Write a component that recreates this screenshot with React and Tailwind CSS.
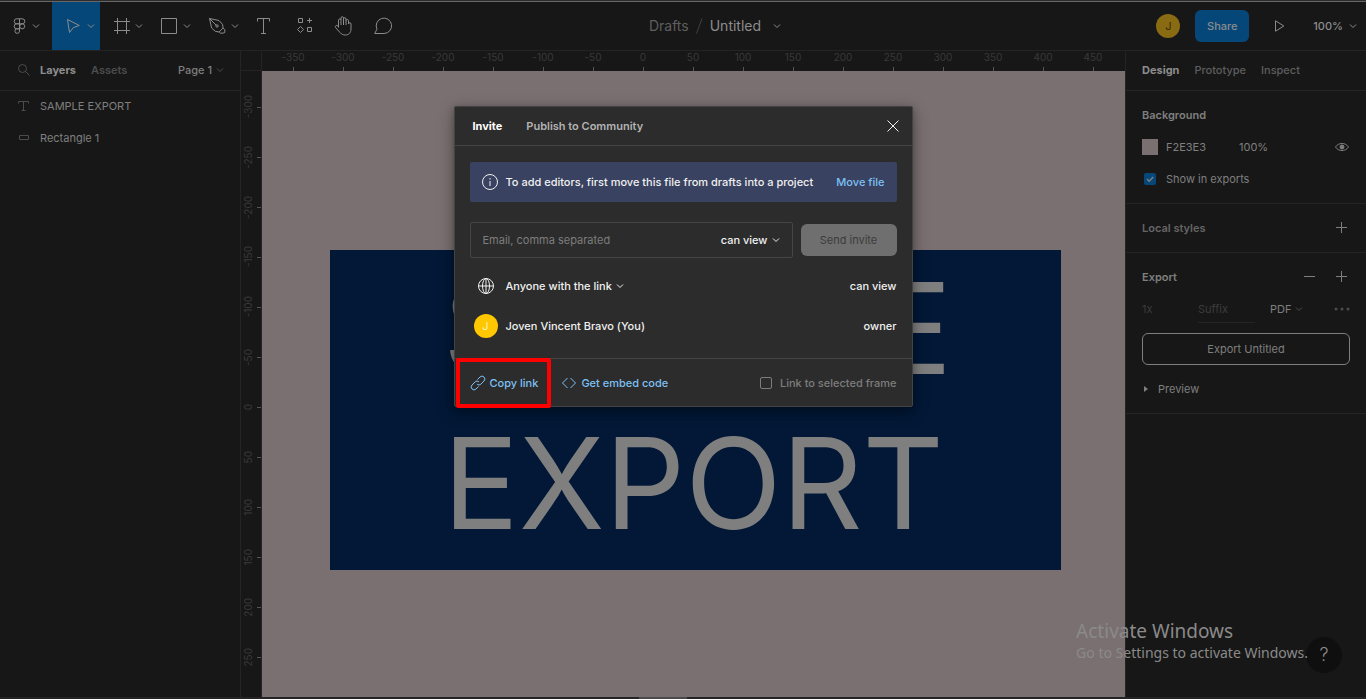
import { useState } from 'react'

const topMarks = [-350, -300, -250, -200, -150, -100, -50, 0, 50, 100, 150, 200, 250, 300, 350, 400, 450]
const sideMarks = [-300, -250, -200, -150, -100, -50, 0, 50, 100, 150, 200, 250]

function Icon({ size = 20, className = '', children }) {
  return (
    <svg width={size} height={size} viewBox={`0 0 ${size} ${size}`} fill="none" stroke="currentColor" className={`flex-shrink-0 ${className}`} aria-hidden="true">
      {children}
    </svg>
  )
}

function Chevron({ className = '' }) {
  return <Icon size={8} className={className}><path d="M1 2.5 4 5.5 7 2.5" /></Icon>
}

function Plus() {
  return <Icon size={12}><path d="M0 5.5h11M5.5 0v11" /></Icon>
}

function Tool({ label, menu, active, children }) {
  return (
    <button aria-label={label} className={`flex h-12 flex-shrink-0 items-center ${menu ? 'w-12 gap-[3px] pl-3' : 'w-10 justify-center'} ${active ? 'bg-[#06477a]' : ''}`}>
      {children}
      {menu && <Chevron />}
    </button>
  )
}

function Toolbar() {
  return (
    <header className="grid h-[49px] flex-shrink-0 grid-cols-[1fr_auto_1fr] items-start border-b border-[#242424] text-[#8c8c8c]">
      <div className="flex">
        <button aria-label="Main menu" className="flex h-12 w-[52px] flex-shrink-0 items-center gap-1 pl-3">
          <Icon size={16}>
            <path d="M7.5.8H4.7a2.5 2.5 0 0 0 0 5h2.8zM7.5.8h2.8a2.5 2.5 0 0 1 0 5H7.5zM7.5 5.8H4.7a2.5 2.5 0 0 0 0 5h2.8zM7.5 10.8H4.7a2.3 2.3 0 1 0 2.8 2.3z" />
            <circle cx="10.2" cy="8.3" r="2.5" />
          </Icon>
          <Chevron />
        </button>
        <Tool label="Move" menu active>
          <Icon><path d="M3.5 3.5 15.3 9.5l-6.1 2.2-3.7 4.8z" /></Icon>
        </Tool>
        <Tool label="Frame" menu>
          <Icon><path d="M5.5 2v16M14.5 2v16M2 5.5h16M2 14.5h16" /></Icon>
        </Tool>
        <Tool label="Rectangle" menu>
          <Icon><path d="M1.5 2.5h15v15h-15z" /></Icon>
        </Tool>
        <Tool label="Pen" menu>
          <Icon>
            <path d="M1.5 2.5 11 4.5l3.5 3.8.6 3.7-4 4-3.7-.6L3.6 12zM1.5 2.5l6.8 6.8M15.1 12l1.8 1.8-.1 2.7-1.8.6-2.4.1-1.5-1.2" />
            <circle cx="9" cy="10" r="1.2" />
          </Icon>
        </Tool>
        <Tool label="Text">
          <Icon><path d="M3.5 5.5v-3h12v3M9.5 2.5v15M7 17.5h5" /></Icon>
        </Tool>
        <Tool label="Resources">
          <Icon><path d="M4.5 2.5h4v4h-4zM13.5 11.5h4v4h-4zM15.5 2v5M13 4.5h5M6.5 10.5l3 3-3 3-3-3z" /></Icon>
        </Tool>
        <Tool label="Hand">
          <Icon>
            <path d="M4.5 11.5V4.2c0-1.8 2.5-1.8 2.5 0V9M7 4V2c0-1.8 2.5-1.8 2.5 0v7M9.500 3c0-1.800 2.500-1.800 2.500 0v6M12 4.700c0-1.700 2.500-1.700 2.500 0V8c0-1.700 2.500-1.700 2.500 0v5c0 3.500-2 6-5.500 6-2.500 0-4-.7-5.500-2.500l-4.500-5c-.8-1.500 1-2.800 2.300-1.600l.7.900" />
          </Icon>
        </Tool>
        <Tool label="Comment">
          <Icon><path d="M.7 17.5H10A7.7 7.7 0 1 0 3 13.2z" /></Icon>
        </Tool>
      </div>

      <div className="flex h-12 items-center pl-16 text-sm">
        <a href="#drafts" className="text-[#5e5e5e]">Drafts</a>
        <Icon className="text-[#404040]"><path d="M7.5 17.5 13 2.5" /></Icon>
        <button className="ml-px flex items-center gap-3">
          Untitled <Chevron />
        </button>
      </div>

      <div className="flex h-12 items-center justify-end pr-[9px]">
        <span className="flex size-6 items-center justify-center rounded-full bg-[#886b12] text-[#382c08]">J</span>
        <button className="ml-[15px] h-8 w-[54px] rounded-md bg-[#06477a] font-medium">Share</button>
        <button aria-label="Present" className="ml-6"><Icon size={12}><path d="M2.5.8v10.400L10.800 6z" /></Icon></button>
        <button className="ml-7 flex items-center gap-1.5 font-medium">
          100% <Chevron />
        </button>
      </div>
    </header>
  )
}

function LayersPanel() {
  return (
    <aside className="w-[241px] flex-shrink-0 border-r border-[#242424]">
      <div className="flex h-10 items-center border-b border-[#242424] pr-4 pb-0.5 pl-[18px]">
        <Icon size={12} className="text-[#4c4c4c]"><circle cx="4.5" cy="4.5" r="4" /><path d="m7.5 7.5 4 4" /></Icon>
        <button className="ml-2.5 font-bold text-[#8c8c8c]">Layers</button>
        <button className="ml-[15px] font-semibold text-[#4c4c4c]">Assets</button>
        <button className="ml-auto flex items-center gap-1 font-medium">
          Page 1 <Chevron className="text-[#4c4c4c]" />
        </button>
      </div>
      <ul>
        <li className="flex h-8 items-center gap-2.5 pb-0.5 pl-[18px]">
          <Icon size={12} className="text-[#4c4c4c]"><path d="M.5 3.5v-2h10v2M5.5 1.5v9M3.5 10.5h4" /></Icon>
          SAMPLE EXPORT
        </li>
        <li className="flex h-8 items-center gap-2.5 pb-0.5 pl-[18px]">
          <Icon size={12} className="text-[#4c4c4c]"><path d="M1.5 3.5h9v4h-9z" /></Icon>
          Rectangle 1
        </li>
      </ul>
    </aside>
  )
}

function Canvas() {
  return (
    <main className="flex min-w-0 flex-1 flex-col text-[10px] text-[#393939]">
      <div className="flex h-5 flex-shrink-0">
        <div className="w-[21px] flex-shrink-0 border-r border-b border-[#242424]" />
        <div className="flex min-w-0 flex-1 overflow-hidden pl-1.5">
          {topMarks.map((n) => (
            <div key={n} className="flex w-[50px] flex-shrink-0 flex-col items-center justify-between">
              <span className="leading-[13px]">{n}</span>
              <span className="h-1 w-px bg-[#555]" />
            </div>
          ))}
        </div>
      </div>
      <div className="flex min-h-0 flex-1">
        <div className="w-[21px] flex-shrink-0 overflow-hidden border-r border-[#242424] pt-[11px]">
          {sideMarks.map((n) => (
            <div key={n} className="flex h-[50px] items-center justify-between">
              <span className="rotate-180 leading-[15px] [writing-mode:vertical-rl]">{n}</span>
              <span className="h-px w-1 bg-[#555]" />
            </div>
          ))}
        </div>
        <div className="relative min-w-0 flex-1 overflow-hidden bg-[#7a7071]">
          <div className="absolute top-[179px] left-[68px] flex h-[320px] w-[731px] items-center justify-center bg-[#021836] pb-2 pl-1">
            <p className="text-[126px] leading-[155px] text-[#7f7f7f]">SAMPLE<br />EXPORT</p>
          </div>
        </div>
      </div>
    </main>
  )
}

function DesignPanel() {
  const [show, setShow] = useState(true)

  return (
    <aside className="w-[241px] flex-shrink-0 border-l border-[#242424]">
      <nav className="flex h-10 items-center gap-[15px] border-b border-[#242424] px-4 pb-0.5 font-medium text-[#5e5e5e]">
        <button className="font-bold text-[#8c8c8c]">Design</button>
        <button>Prototype</button>
        <button>Inspect</button>
      </nav>
      <section className="border-b border-[#242424] px-4 py-2">
        <h2 className="flex h-8 items-center font-semibold">Background</h2>
        <div className="flex h-8 items-center">
          <span className="size-4 bg-[#7a7071]" />
          <span className="ml-2 w-[73px]">F2E3E3</span>
          <span>100%</span>
          <button aria-label="Toggle background" className="ml-auto">
            <Icon size={16}>
              <path d="M1.5 8C4.5 3.3 11.5 3.3 14.5 8c-3 4.7-10 4.7-13 0z" />
              <circle cx="8" cy="8" r="2" fill="currentColor" />
            </Icon>
          </button>
        </div>
        <label className="flex h-8 items-center pl-0.5">
          <span className="grid size-3 place-items-center">
            <input type="checkbox" checked={show} onChange={(e) => setShow(e.target.checked)} className="col-start-1 row-start-1 size-3 appearance-none rounded-xs bg-[#06477a]" />
            {show && <Icon size={12} className="pointer-events-none col-start-1 row-start-1"><path strokeWidth="1.5" d="m3 6 2.2 2.2L9.2 4" /></Icon>}
          </span>
          <span className="ml-2.5">Show in exports</span>
        </label>
      </section>
      <section className="flex h-[49px] items-center justify-between border-b border-[#242424] px-4">
        <h2 className="font-semibold text-[#656565]">Local styles</h2>
        <button aria-label="Add style" className="pr-0.5"><Plus /></button>
      </section>
      <section className="border-b border-[#242424] px-4 py-2">
        <div className="flex h-8 items-center">
          <h2 className="font-semibold">Export</h2>
          <button aria-label="Remove export" className="mr-5 ml-auto"><Icon size={12}><path d="M0 5.5h11" /></Icon></button>
          <button aria-label="Add export" className="pr-0.5"><Plus /></button>
        </div>
        <div className="flex h-8 items-center">
          <span className="w-14 text-[#3c3c3c]">1x</span>
          <input aria-label="Suffix" placeholder="Suffix" className="h-[27px] w-[57px] border-b border-[#242424] placeholder:text-[#3c3c3c]" />
          <button className="ml-[15px] flex items-center gap-1">PDF <Chevron className="text-[#4c4c4c]" /></button>
          <button aria-label="More export options" className="ml-auto text-[#4c4c4c]">
            <Icon size={16}>
              <g fill="currentColor" stroke="none"><circle cx="2" cy="8" r="1.5" /><circle cx="8" cy="8" r="1.5" /><circle cx="14" cy="8" r="1.5" /></g>
            </Icon>
          </button>
        </div>
        <button className="mt-2 h-8 w-full rounded-md border border-[#7f7f7f]">Export Untitled</button>
        <button className="mt-2 flex h-8 items-center gap-2">
          <Icon size={8}><path fill="currentColor" stroke="none" d="M2 1v6l4-3z" /></Icon>
          Preview
        </button>
      </section>
    </aside>
  )
}

function InviteDialog() {
  const [email, setEmail] = useState('')
  const [frame, setFrame] = useState(false)

  return (
    <div role="dialog" aria-label="Invite" className="relative w-[459px] rounded-xs border border-[#434343] bg-[#2c2c2c] font-medium text-[#f0f0f0] shadow-[0_5px_17px_rgba(0,0,0,0.3),0_2px_7px_rgba(0,0,0,0.25)]">
      <div className="flex h-[39px] items-center border-b border-[#454545] pr-3 pl-[18px]">
        <button className="font-bold text-white">Invite</button>
        <button className="ml-6 font-semibold text-[#b3b3b3]">Publish to Community</button>
        <button aria-label="Close" className="ml-auto"><Icon size={14}><path d="m1.5 1.5 11 11M12.5 1.5l-11 11" /></Icon></button>
      </div>

      <div className="px-[15px] pt-4 pb-3">
        <div className="flex h-10 items-center rounded-xs bg-[#394260] px-3">
          <Icon size={16}><circle cx="8" cy="8" r="7.5" /><path d="M8 7v5M8 4v1.5" /></Icon>
          <span className="ml-2">To add editors, first move this file from drafts into a project</span>
          <a href="#move" className="ml-auto text-[#7cc0f4]">Move file</a>
        </div>

        <div className="mt-5 flex items-center gap-2">
          <div className="flex h-9 flex-1 items-center rounded-xs border border-[#454545] px-3">
            <input aria-label="Email" value={email} onChange={(e) => setEmail(e.target.value)} placeholder="Email, comma separated" className="min-w-0 flex-1 font-normal outline-none placeholder:text-[#7d7d7d]" />
            <button className="flex items-center gap-1">can view <Chevron /></button>
          </div>
          <button className="h-8 w-24 rounded-md bg-[#6f6f6f] font-normal text-[#3c3c3c]">Send invite</button>
        </div>

        <div className="mt-2 flex h-10 items-center">
          <Icon size={16} className="ml-2">
            <circle cx="8" cy="8" r="7.5" /><ellipse cx="8" cy="8" rx="3.5" ry="7.5" /><path d="M.5 8h15M8 .5v15" />
          </Icon>
          <button className="ml-3 flex items-center gap-1">Anyone with the link <Chevron /></button>
          <span className="ml-auto">can view</span>
        </div>
        <div className="flex h-10 items-center">
          <span className="ml-1 flex size-6 items-center justify-center rounded-full bg-[#ffc700] font-normal text-[#fff0b8]">J</span>
          <span className="ml-2">Joven Vincent Bravo (You)</span>
          <span className="ml-auto">owner</span>
        </div>
      </div>

      <div className="flex h-12 items-center border-t border-[#454545] px-[15px] text-[#7cc0f4]">
        <button className="flex items-center gap-1">
          <Icon size={16}>
            <path d="m7.5 4.5 2.5-2.5a2.6 2.6 0 0 1 4 4L11 9a2.6 2.6 0 0 1-4 0M8.5 11.5 6 14a2.6 2.6 0 0 1-4-4l3-3a2.6 2.6 0 0 1 4 0" />
          </Icon>
          Copy link
        </button>
        <button className="ml-[23px] flex items-center gap-1">
          <Icon size={16}><path d="M6.5 3 1.5 8l5 5M9.5 3l5 5-5 5" /></Icon>
          Get embed code
        </button>
        <label className="ml-auto flex items-center gap-2 text-[#7d7d7d]">
          <input type="checkbox" checked={frame} onChange={(e) => setFrame(e.target.checked)} className="size-3 appearance-none rounded-xs border border-[#7d7d7d] checked:bg-[#7d7d7d]" />
          Link to selected frame
        </label>
      </div>

      {/* highlight around the copy link button */}
      <div className="pointer-events-none absolute -bottom-0.5 left-px h-[50px] w-[95px] rounded-xs border-4 border-[#ff0000]" />
    </div>
  )
}

export default function App() {
  return (
    <div className="relative flex h-screen flex-col overflow-hidden bg-[#171717] font-['Inter',sans-serif] text-[11px] leading-4 text-[#7f7f7f]">
      <div className="h-0.5 flex-shrink-0 border-b border-[#666] bg-[#2c2c2c]" />
      <Toolbar />
      <div className="flex min-h-0 flex-1">
        <LayersPanel />
        <Canvas />
        <DesignPanel />
      </div>
      <div className="flex h-0.5 flex-shrink-0 justify-center bg-[#242424] pr-10">
        <div className="w-12 bg-[#4a4a4a]" />
      </div>

      <button aria-label="Help" className="absolute right-6 bottom-[26px] size-9 rounded-full bg-[#0f0f0f] text-lg font-light text-[#8c8c8c]">?</button>
      <div className="pointer-events-none absolute right-[58px] bottom-9 font-['Noto_Sans',sans-serif] text-[#8a8a8a]">
        <p className="text-[19px] leading-6">Activate Windows</p>
        <p className="text-sm leading-5">Go to Settings to activate Windows.</p>
      </div>

      <div className="absolute inset-x-0 top-[106px] flex justify-center">
        <InviteDialog />
      </div>
    </div>
  )
}
